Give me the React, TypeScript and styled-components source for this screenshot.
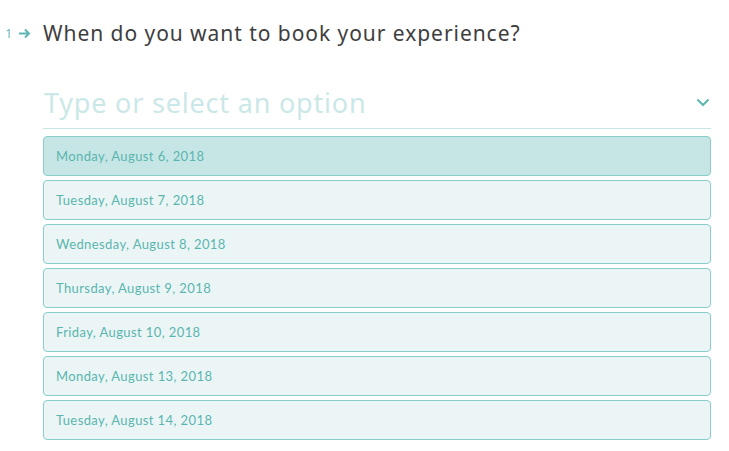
import React from "react";
import styled, { createGlobalStyle } from "styled-components";

const Global = createGlobalStyle`
  html, body { margin: 0; padding: 0; background: #ffffff; }
  body { font-family: "Open Sans", sans-serif; }
`;

const Page = styled.div`
  width: 729px;
  height: 451px;
  box-sizing: border-box;
  padding: 19px 18px 0 0;
  display: grid;
  grid-template-columns: 43px 1fr;
  overflow: hidden;
`;

const Counter = styled.div`
  display: flex;
  align-items: center;
  justify-content: flex-end;
  gap: 6px;
  height: 28px;
  padding-right: 12px;
  color: #5cb7b0;
  font-family: "Open Sans", sans-serif;
  font-size: 12px;
`;

const Body = styled.div`
  display: flex;
  flex-direction: column;
`;

const Question = styled.h1`
  margin: 0;
  height: 28px;
  line-height: 28px;
  font-family: "Noto Sans", sans-serif;
  font-weight: 400;
  font-size: 21px;
  color: #3e3e3e;
  letter-spacing: 0.95px;
`;

const InputRow = styled.div`
  margin-top: 39px;
  display: flex;
  align-items: center;
  justify-content: space-between;
  height: 42px;
  border-bottom: 1px solid #c6e6e6;
  margin-bottom: 7px;
`;

const Placeholder = styled.div`
  font-family: "Noto Sans", sans-serif;
  font-size: 27px;
  color: #cbe8e8;
  padding-left: 1px;
  margin-top: -10px;
  letter-spacing: 0.8px;
`;

const Chevron = styled.svg`
  margin-right: 1px;
  margin-top: -9px;
`;

const List = styled.div`
  display: flex;
  flex-direction: column;
  gap: 4px;
`;

const Option = styled.div<{ $active?: boolean }>`
  box-sizing: border-box;
  height: 40px;
  display: flex;
  align-items: center;
  padding-left: 12px;
  border: 1px solid #88cfc9;
  border-radius: 4px;
  background: ${(p) => (p.$active ? "#c6e6e6" : "#ebf5f6")};
  color: #5ab5ae;
  font-family: "Lato", sans-serif;
  font-size: 13px;
  letter-spacing: 0.4px;
`;

const dates = [
  "Monday, August 6, 2018",
  "Tuesday, August 7, 2018",
  "Wednesday, August 8, 2018",
  "Thursday, August 9, 2018",
  "Friday, August 10, 2018",
  "Monday, August 13, 2018",
  "Tuesday, August 14, 2018",
];

export default function App() {
  return (
    <>
      <Global />
      <Page>
        <Counter>
          <span>1</span>
          <svg width="13" height="11" viewBox="0 0 13 11">
            <path d="M1 5.5h10M7 1.5l4 4-4 4" stroke="#5cb7b0" strokeWidth="1.9" fill="none" />
          </svg>
        </Counter>
        <Body>
          <Question>When do you want to book your experience?</Question>
          <InputRow>
            <Placeholder>Type or select an option</Placeholder>
            <Chevron width="14" height="9" viewBox="0 0 14 9">
              <path d="M1.5 1.5L7 7l5.5-5.5" stroke="#5cb7b0" strokeWidth="2" fill="none" />
            </Chevron>
          </InputRow>
          <List>
            {dates.map((d, i) => (
              <Option key={d} $active={i === 0}>
                {d}
              </Option>
            ))}
          </List>
        </Body>
      </Page>
    </>
  );
}
